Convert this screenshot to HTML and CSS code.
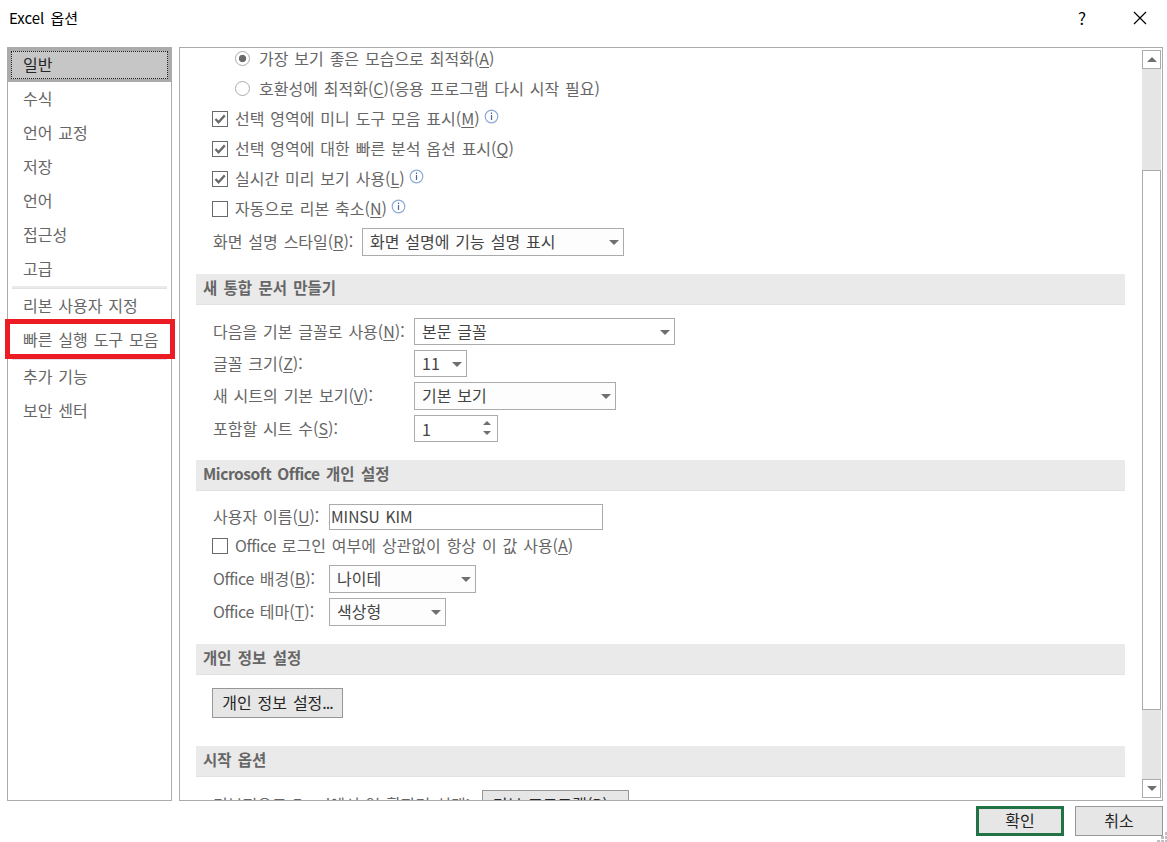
FILE: index.html
```html
<!DOCTYPE html>
<html lang="ko">
<head>
	<meta charset="UTF-8" />
	<meta name="viewport" content="width=device-width, initial-scale=1.0" />
	<title>Excel 옵션</title>
	<link rel="stylesheet" href="styles.css">
</head>
<body>
	<svg class="defs" width="0" height="0">
		<symbol id="info" viewBox="0 0 15 15">
			<circle cx="7.5" cy="7.5" r="6.3" fill="#fff" stroke="#8eabd6" stroke-width="1.2" />
			<path d="M7.5 6v5M7.5 3.6v1.4" stroke="#44669c" stroke-width="1.2" />
		</symbol>
		<symbol id="tick" viewBox="0 0 16 16">
			<path d="M3.5 8l3 3.2L12.8 4.4" fill="none" stroke="#6a6a6a" stroke-width="2.3" />
		</symbol>
	</svg>

	<header class="titlebar">
		<h1>Excel 옵션</h1>
		<span class="help">?</span>
		<svg class="close" width="14" height="14" viewBox="0 0 14 14"><path d="M1 1l12 12M13 1L1 13" stroke="#000" stroke-width="1.2" /></svg>
	</header>

	<main class="main">
		<ul class="side">
			<li class="active"><span>일반</span></li>
			<li>수식</li>
			<li>언어 교정</li>
			<li>저장</li>
			<li>언어</li>
			<li>접근성</li>
			<li>고급</li>
			<li class="line"></li>
			<li>리본 사용자 지정</li>
			<li class="mark">빠른 실행 도구 모음</li>
			<li class="line"></li>
			<li>추가 기능</li>
			<li>보안 센터</li>
		</ul>

		<div class="panel">
			<div class="content">
				<div class="row radio-row"><i class="radio on"></i><label>가장 보기 좋은 모습으로 최적화(<u>A</u>)</label></div>
				<div class="row radio-row"><i class="radio"></i><label>호환성에 최적화(<u>C</u>)(응용 프로그램 다시 시작 필요)</label></div>
				<div class="row"><i class="check"><svg><use href="#tick" /></svg></i><label>선택 영역에 미니 도구 모음 표시(<u>M</u>)</label><svg class="info"><use href="#info" /></svg></div>
				<div class="row"><i class="check"><svg><use href="#tick" /></svg></i><label>선택 영역에 대한 빠른 분석 옵션 표시(<u>Q</u>)</label></div>
				<div class="row"><i class="check"><svg><use href="#tick" /></svg></i><label>실시간 미리 보기 사용(<u>L</u>)</label><svg class="info"><use href="#info" /></svg></div>
				<div class="row"><i class="check"></i><label>자동으로 리본 축소(<u>N</u>)</label><svg class="info"><use href="#info" /></svg></div>
				<div class="field style-field">
					<label>화면 설명 스타일(<u>R</u>):</label>
					<div class="select w-style">화면 설명에 기능 설명 표시</div>
				</div>

				<h2>새 통합 문서 만들기</h2>
				<div class="fields book">
					<label>다음을 기본 글꼴로 사용(<u>N</u>):</label>
					<div class="select plain w-font">본문 글꼴</div>
					<label>글꼴 크기(<u>Z</u>):</label>
					<div class="select plain w-size">11</div>
					<label>새 시트의 기본 보기(<u>V</u>):</label>
					<div class="select w-view">기본 보기</div>
					<label>포함할 시트 수(<u>S</u>):</label>
					<div class="spin">1<span class="arrows"><i class="up"></i><i class="down"></i></span></div>
				</div>

				<h2><span class="en">Microsoft Office</span> 개인 설정</h2>
				<div class="field user-field">
					<label>사용자 이름(<u>U</u>):</label>
					<div class="input">MINSU KIM</div>
				</div>
				<div class="row always"><i class="check"></i><label><span class="en">Office</span> 로그인 여부에 상관없이 항상 이 값 사용(<u>A</u>)</label></div>
				<div class="fields office">
					<label><span class="en">Office</span> 배경(<u>B</u>):</label>
					<div class="select w-back">나이테</div>
					<label><span class="en">Office</span> 테마(<u>T</u>):</label>
					<div class="select w-theme">색상형</div>
				</div>

				<h2>개인 정보 설정</h2>
				<button class="btn privacy">개인 정보 설정<span class="dots">...</span></button>

				<h2>시작 옵션</h2>
				<div class="field start-field">
					<label>기본적으로 Excel에서 열 확장명 선택:</label>
					<button class="btn programs">기본 프로그램(<u>P</u>)<span class="dots">...</span></button>
				</div>
			</div>
			<div class="scroll">
				<span class="arrow"><i class="up"></i></span>
				<span class="thumb"></span>
				<span class="arrow"><i class="down"></i></span>
			</div>
		</div>
	</main>

	<footer class="footer">
		<button class="btn ok">확인</button>
		<button class="btn">취소</button>
	</footer>
	<svg class="grip" width="11" height="10" fill="#bfbfbf"><path d="M8 0h3v3H8zM4 4h3v3H4zM8 4h3v3H8zM0 8h3v2H0zM4 8h3v2H4zM8 8h3v2H8z" /></svg>
</body>
</html>
```
FILE: styles.css
```css
* {
	padding: 0;
	margin: 0;
	box-sizing: border-box;
}

body {
	position: relative;
	width: 1167px;
	height: 842px;
	overflow: hidden;
	background-color: #fff;
	color: #666;
	font: 16px/24px "Noto Sans CJK KR", sans-serif;
	word-spacing: 1.4px;
}

.defs {
	position: absolute;
}

ul {
	list-style: none;
}

label {
	padding-bottom: 2px;
	white-space: nowrap;
}

u {
	text-underline-offset: 2px;
	text-decoration-thickness: 1px;
}

.en {
	letter-spacing: -.4px;
}

.dots {
	letter-spacing: -1px;
}

/* title bar */
.titlebar {
	display: flex;
	align-items: center;
	height: 47px;
	padding: 0 20px 12px 9px;
	color: #000;
}

.titlebar h1 {
	flex: 1;
	font-size: 15px;
	font-weight: 400;
	word-spacing: 2px;
}

.titlebar .help {
	width: 10px;
	margin-right: 45px;
	font-size: 17px;
}

/* main */
.main {
	display: flex;
	gap: 7px;
	height: 754px;
	padding: 0 4px 0 7px;
}

.side {
	width: 165px;
	border: 1px solid #ababab;
}

.side li {
	height: 34px;
	padding-left: 15px;
	line-height: 32px;
	white-space: nowrap;
}

.side .active {
	height: 35px;
	margin: -1px -1px 0;
	padding: 4px 4px 3px;
	background-color: #ababab;
	color: #262626;
}

.side .active span {
	display: block;
	height: 28px;
	padding-left: 11px;
	border: 1px dotted #222;
	background-color: #c6c6c6;
	line-height: 24px;
}

.side .line {
	height: 3px;
	margin: 0 4px;
	border-bottom: 1px solid #e1e1e6;
	background-color: #eaeaea;
}

.side .mark {
	position: relative;
}

.side .mark::after {
	content: "";
	position: absolute;
	top: -4px;
	left: -3px;
	z-index: 1;
	width: 160px;
	height: 30px;
	border: 5px solid #ed1c24;
}

.panel {
	display: flex;
	flex: 1;
	justify-content: space-between;
	padding: 0 1px 0 16px;
	border: 1px solid #ababab;
	overflow: hidden;
}

.content {
	width: 929px;
	margin-top: -4px;
}

.row {
	display: flex;
	align-items: center;
	height: 30px;
	padding-left: 16px;
}

.radio-row {
	padding-left: 39px;
}

.radio {
	width: 15px;
	height: 15px;
	margin: -1px 9px 0 0;
	border: 1px solid #ababab;
	border-radius: 50%;
}

.radio.on {
	background: radial-gradient(circle, #6a6a6a 3.3px, #fff 4.1px);
}

.check {
	width: 16px;
	height: 16px;
	margin-right: 7px;
	border: 1px solid #6a6a6a;
}

.check svg {
	display: block;
	width: 16px;
	height: 16px;
	margin: -1px;
}

.info {
	width: 15px;
	height: 15px;
	margin: -5px 0 0 4px;
}

.field {
	display: flex;
	align-items: center;
	padding-left: 17px;
}

.style-field {
	margin: 4px 0 18px;
}

.style-field label {
	width: 149px;
}

h2 {
	height: 31px;
	padding-left: 7px;
	border-bottom: 1px solid #e1e1e6;
	background-color: #eaeaea;
	font-size: 15.5px;
	font-weight: 700;
	line-height: 26px;
	word-spacing: 2px;
}

.fields {
	display: grid;
	align-items: center;
	padding-left: 17px;
}

.book {
	grid-template-columns: 201px 1fr;
	row-gap: 5px;
	margin: 13px 0 18px;
}

.office {
	grid-template-columns: 116px 1fr;
	row-gap: 5px;
	margin: 4px 0 18px;
}

.select,
.spin,
.input {
	display: flex;
	align-items: center;
	justify-content: space-between;
	height: 28px;
	padding: 0 4px 0 7px;
	border: 1px solid #ababab;
	background-color: #fdfdfd;
	color: #444;
	line-height: 22px;
}

.select {
	padding-bottom: 2px;
}

.select.plain,
.spin {
	height: 27px;
	background-color: #fff;
}

.select.plain {
	padding-bottom: 1px;
}

.up,
.down {
	width: 0;
	height: 0;
	border: 5px solid transparent;
}

.up {
	border-bottom-color: #6f6f6f;
	border-top: 0;
}

.down {
	border-top-color: #6f6f6f;
	border-bottom: 0;
}

.select::after {
	content: "";
	margin-top: 2px;
	border: 5px solid transparent;
	border-top-color: #6f6f6f;
	border-bottom: 0;
}

.w-style { width: 262px; }
.w-font { width: 261px; }
.w-size { width: 53px; }
.w-view { width: 202px; }
.w-back { width: 147px; }
.w-theme { width: 117px; }

.spin {
	width: 84px;
	padding-right: 6px;
}

.arrows {
	display: flex;
	flex-direction: column;
	gap: 6px;
	margin-top: -1px;
}

.arrows i {
	border-width: 4px;
}

.arrows .up {
	border-top: 0;
}

.arrows .down {
	border-bottom: 0;
}

.user-field {
	margin-top: 13px;
}

.user-field label {
	width: 116px;
}

.input {
	width: 274px;
	height: 26px;
	padding: 0 1px 2px;
	background-color: #fff;
	font-size: 15.5px;
}

.always {
	height: 31px;
}

/* buttons */
.btn {
	width: 88px;
	height: 30px;
	padding-bottom: 2px;
	border: 1px solid #979797;
	background-color: #e6e6e6;
	color: #262626;
	font: inherit;
	word-spacing: inherit;
	line-height: 26px;
	white-space: nowrap;
}

.btn.ok {
	border: 3px solid #217346;
	line-height: 22px;
}

.btn.privacy {
	display: block;
	width: 131px;
	margin: 13px 0 28px 16px;
}

.btn.programs {
	width: 147px;
}

.start-field {
	margin-top: 13px;
}

.start-field label {
	width: 269px;
}

/* scrollbar */
.scroll {
	display: flex;
	flex-direction: column;
	width: 19px;
	height: 748px;
	margin-top: 2px;
	background-color: #e5e5e5;
}

.scroll .arrow {
	display: flex;
	align-items: center;
	justify-content: center;
	height: 19px;
	border: 1px solid #ababab;
	background-color: #fff;
}

.scroll .thumb {
	height: 540px;
	margin: 101px 0 69px;
	border: 1px solid #ababab;
	background-color: #fff;
}

/* footer */
.footer {
	display: flex;
	justify-content: flex-end;
	gap: 11px;
	padding: 5px 4px 0;
}

.grip {
	position: absolute;
	right: -1px;
	bottom: 0;
}
```
